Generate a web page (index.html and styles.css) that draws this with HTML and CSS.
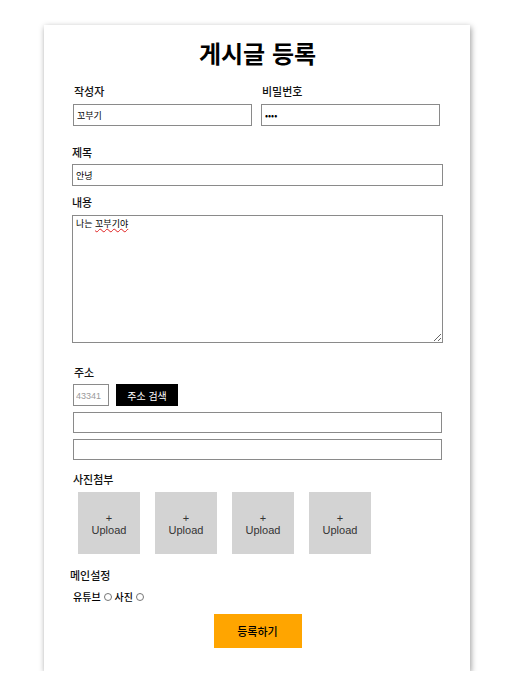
FILE: index.html
```html
<!DOCTYPE html>
<html lang="ko">
<head>
    <meta charset="UTF-8">
    <meta name="viewport" content="width=device-width, initial-scale=1.0">
    <title>게시글 등록</title>
    <link rel="stylesheet" href="styles.css">
</head>
<body>

    <div class="card">
        <!-- 제목 -->
        <h1 class="title">게시글 등록</h1>

        <!-- 작성자 / 비밀번호 -->
        <div class="row">
            <div class="field">
                <label class="label label-top">작성자</label>
                <input class="input input-half" type="text" value="꼬부기">
            </div>
            <div class="field">
                <label class="label label-top">비밀번호</label>
                <input class="input input-half" type="password" value="1234">
            </div>
        </div>

        <label class="label label-subject">제목</label>
        <input class="input input-full" type="text" value="안녕">

        <label class="label label-content">내용</label>
        <div class="textarea-wrap">
            <textarea class="textarea" spellcheck="false">나는 꼬부기야</textarea>
            <span class="spell">나는 <u>꼬부기야</u></span>
        </div>

        <!-- 주소 -->
        <label class="label label-address">주소</label>
        <div class="zip-row">
            <input class="input input-zip" type="text" placeholder="43341">
            <button class="btn-search">주소 검색</button>
        </div>
        <input class="input input-address" type="text">
        <input class="input input-address" type="text">

        <!-- 사진첨부 -->
        <label class="label label-photo">사진첨부</label>
        <div class="uploads">
            <div class="upload"><span>+</span><span>Upload</span></div>
            <div class="upload"><span>+</span><span>Upload</span></div>
            <div class="upload"><span>+</span><span>Upload</span></div>
            <div class="upload"><span>+</span><span>Upload</span></div>
        </div>

        <!-- 메인설정 -->
        <label class="label label-main">메인설정</label>
        <div class="radios">
            유튜브 <input type="radio" name="main" class="radio"> 사진 <input type="radio" name="main" class="radio">
        </div>

        <div class="submit-wrap">
            <button class="btn-submit">등록하기</button>
        </div>
    </div>

</body>
</html>
```

FILE: styles.css
```css
/* Page */
body {
    margin: 0;
    background-color: #fff;
    font-family: "Liberation Sans", "Noto Sans CJK KR", sans-serif;
    color: #000;
}

/* Carte principale */
.card {
    box-sizing: border-box;
    width: 426px;
    height: 646px;
    margin: 25px 0 0 44px;
    padding: 0 27px 0 28px;
    background-color: #fff;
    box-shadow: 1px 2px 6px rgba(0, 0, 0, 0.4);
    display: flex;
    flex-direction: column;
    align-items: flex-start;
}

.title {
    align-self: stretch;
    margin: 12px 0 0;
    font-size: 24px;
    line-height: 32px;
    font-weight: bold;
    text-align: center;
    font-family: "Noto Sans CJK KR", sans-serif;
}

/* Libellés */
.label {
    display: block;
    font-family: "Noto Sans CJK KR", sans-serif;
    font-size: 11px;
    font-weight: 500;
    line-height: 14px;
    color: #111;
}

.label-top { margin: 15px 0 6px 1px; }
.label-subject { margin: 19px 0 5px 0; }
.label-content { margin: 9px 0 6px 0; }
.label-address { margin: 22px 0 5px 2px; }
.label-photo { margin: 12px 0 6px 1px; }
.label-main { margin: 14px 0 8px -2px; }

/* Champs */
.row {
    display: flex;
    gap: 9px;
    margin-left: 1px;
}

.input {
    box-sizing: border-box;
    height: 22px;
    margin: 0;
    padding: 0 3px;
    border: 1px solid #8a8a8a;
    font-family: "Noto Sans CJK KR", sans-serif;
    font-size: 9px;
    color: #000;
    background: #fff;
}

.input-half { width: 179px; }
.input-full { width: 371px; }

.textarea-wrap {
    position: relative;
}

.textarea {
    box-sizing: border-box;
    display: block;
    width: 371px;
    height: 128px;
    margin: 0;
    padding: 2px 3px;
    border: 1px solid #8a8a8a;
    font-family: "Noto Sans CJK KR", sans-serif;
    font-size: 9px;
    line-height: 11px;
}

/* Soulignement du correcteur */
.spell {
    position: absolute;
    left: 4px;
    top: 3px;
    font-family: "Noto Sans CJK KR", sans-serif;
    font-size: 9px;
    line-height: 11px;
    color: transparent;
    pointer-events: none;
}

.spell u {
    text-decoration: underline wavy #e02020;
    text-decoration-thickness: 1px;
}

.zip-row {
    display: flex;
    gap: 7px;
    margin-left: 1px;
}

.input-zip {
    width: 36px;
    padding: 0 2px;
}

.input-zip::placeholder {
    color: #9a9a9a;
    font-family: "Liberation Sans", sans-serif;
}

.btn-search {
    width: 62px;
    height: 22px;
    border: none;
    background-color: #000;
    color: #fff;
    font-family: "Noto Sans CJK KR", sans-serif;
    font-size: 10px;
    padding: 0;
}

.input-address {
    width: 369px;
    height: 21px;
    margin: 6px 0 0 1px;
}

.input-address + .input-address {
    margin-top: 6px;
}

/* Photos */
.uploads {
    display: flex;
    gap: 15px;
    margin-left: 6px;
}

.upload {
    width: 62px;
    height: 62px;
    background-color: #d3d3d3;
    display: flex;
    flex-direction: column;
    align-items: center;
    justify-content: center;
    font-size: 11px;
    line-height: 12px;
    color: #333;
    padding-top: 2px;
    box-sizing: border-box;
}

/* Boutons radio */
.radios {
    display: flex;
    align-items: center;
    gap: 2px;
    font-family: "Noto Sans CJK KR", sans-serif;
    font-size: 10px;
    font-weight: 500;
    line-height: 14px;
    margin-left: 1px;
}

.radio {
    width: 8px;
    height: 8px;
    margin: 0 1px;
}

.submit-wrap {
    align-self: stretch;
    display: flex;
    justify-content: center;
    margin-top: 10px;
}

.btn-submit {
    width: 88px;
    height: 34px;
    border: none;
    background-color: #ffa500;
    color: #000;
    font-family: "Noto Sans CJK KR", sans-serif;
    font-size: 11px;
    font-weight: 500;
    padding: 0;
}
```
